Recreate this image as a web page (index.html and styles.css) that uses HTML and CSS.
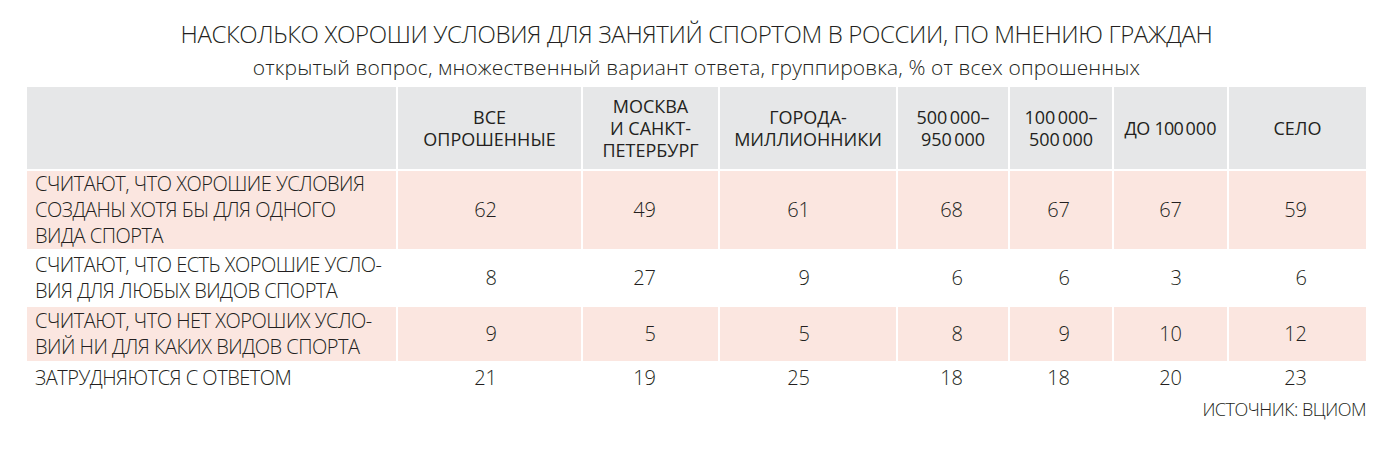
FILE: index.html
```html
<!DOCTYPE html>
<html lang="ru">
<head>
<meta charset="utf-8">
<title>Условия для занятий спортом</title>
<link rel="stylesheet" href="styles.css">
</head>
<body>
<div class="page">
  <h1 class="title">НАСКОЛЬКО ХОРОШИ УСЛОВИЯ ДЛЯ ЗАНЯТИЙ СПОРТОМ В РОССИИ, ПО МНЕНИЮ ГРАЖДАН</h1>
  <p class="subtitle">открытый вопрос, множественный вариант ответа, группировка, % от всех опрошенных</p>
  <div class="table">
    <div class="row head">
      <div class="cell label"></div>
      <div class="cell">ВСЕ<br>ОПРОШЕННЫЕ</div>
      <div class="cell">МОСКВА<br>И САНКТ-<br>ПЕТЕРБУРГ</div>
      <div class="cell">ГОРОДА-<br>МИЛЛИОННИКИ</div>
      <div class="cell">500&#8239;000–<br>950&#8239;000</div>
      <div class="cell">100&#8239;000–<br>500&#8239;000</div>
      <div class="cell tight">ДО 100&#8239;000</div>
      <div class="cell">СЕЛО</div>
    </div>
    <div class="row data pink tall">
      <div class="cell label">СЧИТАЮТ, ЧТО ХОРОШИЕ УСЛОВИЯ<br>СОЗДАНЫ ХОТЯ БЫ ДЛЯ ОДНОГО<br>ВИДА СПОРТА</div>
      <div class="cell num">62</div>
      <div class="cell num">49</div>
      <div class="cell num">61</div>
      <div class="cell num">68</div>
      <div class="cell num">67</div>
      <div class="cell num">67</div>
      <div class="cell num">59</div>
    </div>
    <div class="row data mid">
      <div class="cell label">СЧИТАЮТ, ЧТО ЕСТЬ ХОРОШИЕ УСЛО-<br>ВИЯ ДЛЯ ЛЮБЫХ ВИДОВ СПОРТА</div>
      <div class="cell num">8</div>
      <div class="cell num">27</div>
      <div class="cell num">9</div>
      <div class="cell num">6</div>
      <div class="cell num">6</div>
      <div class="cell num">3</div>
      <div class="cell num">6</div>
    </div>
    <div class="row data pink mid">
      <div class="cell label">СЧИТАЮТ, ЧТО НЕТ ХОРОШИХ УСЛО-<br>ВИЙ НИ ДЛЯ КАКИХ ВИДОВ СПОРТА</div>
      <div class="cell num">9</div>
      <div class="cell num">5</div>
      <div class="cell num">5</div>
      <div class="cell num">8</div>
      <div class="cell num">9</div>
      <div class="cell num">10</div>
      <div class="cell num">12</div>
    </div>
    <div class="row data short">
      <div class="cell label">ЗАТРУДНЯЮТСЯ С ОТВЕТОМ</div>
      <div class="cell num">21</div>
      <div class="cell num">19</div>
      <div class="cell num">25</div>
      <div class="cell num">18</div>
      <div class="cell num">18</div>
      <div class="cell num">20</div>
      <div class="cell num">23</div>
    </div>
  </div>
  <p class="source">ИСТОЧНИК: ВЦИОМ</p>
</div>
</body>
</html>
```
FILE: styles.css
```css
* { box-sizing: border-box; }

body {
  margin: 0;
  background: #ffffff;
  color: #231f20;
  font-family: "Open Sans", "Noto Sans", sans-serif;
}

.page {
  padding: 17px 32px 0 27px;
}

.title {
  margin: 0;
  text-align: center;
  font-size: 24px;
  line-height: 34px;
  font-weight: 300;
  letter-spacing: -0.36px;
}

.subtitle {
  margin: 2px 0 0;
  text-align: center;
  font-size: 21px;
  line-height: 28px;
  font-weight: 300;
  letter-spacing: 0.12px;
}

.table {
  margin-top: 6px;
  display: flex;
  flex-direction: column;
  gap: 2px;
}

.row {
  display: grid;
  grid-template-columns: 369px 183px 135px 176px 110px 102px 113px 137px;
  column-gap: 2px;
}

.head { height: 82px; }
.tall { height: 78px; }
.mid { height: 54px; }
.short { height: 28px; }

.head .cell {
  background: #e6e7e8;
  display: flex;
  align-items: center;
  justify-content: center;
  text-align: center;
  font-size: 18px;
  line-height: 22px;
  font-weight: 500;
}

.head .tight { letter-spacing: -0.7px; word-spacing: 1px; }

.pink .cell { background: #fbe6e0; }

.data .cell {
  display: flex;
  align-items: center;
  font-size: 20px;
  line-height: 26px;
  font-weight: 300;
}

.data .label {
  padding-left: 8px;
  letter-spacing: -0.5px;
  white-space: nowrap;
}

.short .cell { padding-top: 2px; }

.num { justify-content: flex-end; }
.num:nth-child(2) { padding-right: 84px; }
.num:nth-child(3) { padding-right: 62px; }
.num:nth-child(4) { padding-right: 86px; }
.num:nth-child(5) { padding-right: 45px; }
.num:nth-child(6) { padding-right: 42px; }
.num:nth-child(7) { padding-right: 45px; }
.num:nth-child(8) { padding-right: 59px; }

.source {
  margin: 6px 0 0;
  text-align: right;
  font-size: 18px;
  line-height: 24px;
  font-weight: 300;
  letter-spacing: -0.5px;
}
```
